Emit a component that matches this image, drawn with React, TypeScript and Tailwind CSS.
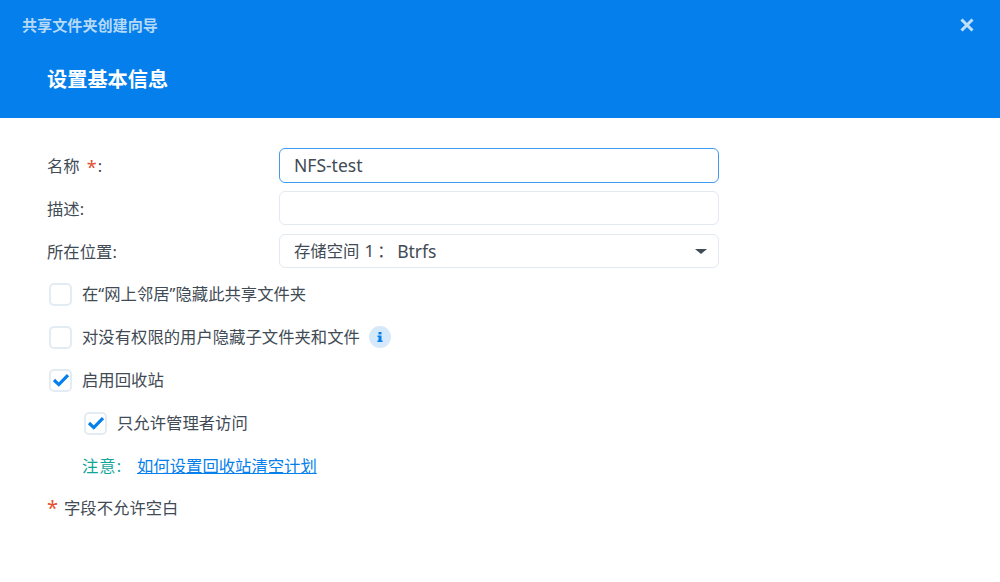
const Check = () => (
  <svg width="18" height="14" viewBox="0 0 18 14" fill="none">
    <path d="M2 7L6.8 11.6L16 2.2" stroke="#057feb" strokeWidth="3.2" />
  </svg>
)

const Box = ({ on }: { on?: boolean }) => (
  <span className="w-[23px] h-[23px] rounded-[5px] border-2 border-[#e3ebf3] bg-white flex items-center justify-center shrink-0">
    {on && <Check />}
  </span>
)

const font = { fontFamily: '"Noto Sans", "Noto Sans CJK SC", sans-serif' }

const App = () => {
  return (
    <div style={font} className="w-[1000px] h-[582px] bg-white text-[16.35px] text-[#414b55] overflow-hidden">
      <div className="h-[118px] bg-[#057feb] relative pt-[14px]">
        <div className="pl-[22px] text-[15.1px] font-bold text-[#b4d9f9] leading-[22px]">共享文件夹创建向导</div>
        <div className="pl-[47px] mt-[29px] text-[20.2px] font-bold text-white leading-[28px]">设置基本信息</div>
        <svg className="absolute left-[960px] top-[18px]" width="14" height="14" viewBox="0 0 14 14" fill="none">
          <path d="M1.5 1.5L12.5 12.5M12.5 1.5L1.5 12.5" stroke="#c4e0f9" strokeWidth="3" />
        </svg>
      </div>

      <div className="pl-[47px] pt-[30px]">
        <div className="flex items-center h-[34px]">
          <div className="w-[232px] flex items-center pt-[2px]">
            名称
            <span className="text-[#e64c2e] text-[18px] leading-none ml-[7px] mr-[1px] mt-[2px]">*</span>:
          </div>
          <div className="w-[440px] h-[35px] rounded-md border border-[#3f9cf0] pl-[14px] flex items-center text-[17.5px]">NFS-test</div>
        </div>
        <div className="flex items-center h-[34px] mt-[9px]">
          <div className="w-[232px] pt-[2px]">描述:</div>
          <div className="w-[440px] h-[34px] rounded-md border border-[#e3e9f0]"></div>
        </div>
        <div className="flex items-center h-[34px] mt-[9px]">
          <div className="w-[232px] pt-[2px]">所在位置:</div>
          <div className="w-[440px] h-[34px] rounded-md border border-[#e3e9f0] pl-[14px] pr-[11px] flex items-center justify-between">
            <span className="flex items-center">
              存储空间
              <span className="text-[17px] ml-[5px]">1</span>
              <span className="ml-[3px] w-[20px]">：</span>
              <span className="text-[17.5px]">Btrfs</span>
            </span>
            <span className="w-0 h-0 border-x-[6px] border-x-transparent border-t-[5px] border-t-[#414b55]"></span>
          </div>
        </div>

        <div className="flex items-center gap-[10px] mt-[14px] h-[24px] pl-[2px]">
          <Box />
          <span>在“网上邻居”隐藏此共享文件夹</span>
        </div>
        <div className="flex items-center gap-[10px] mt-[19px] h-[24px] pl-[2px]">
          <Box />
          <span>对没有权限的用户隐藏子文件夹和文件</span>
          <span className="w-[22px] h-[22px] rounded-full bg-[#d6e9fb] -ml-[1px] flex items-center justify-center">
            <svg width="6" height="10" viewBox="0 0 6 10" fill="#057feb">
              <rect x="1.5" y="0" width="3" height="2.4" />
              <path d="M0.5 3.6H4.5V8.6H5.6V10H0.4V8.6H1.5V5H0.5Z" />
            </svg>
          </span>
        </div>
        <div className="flex items-center gap-[10px] mt-[19px] h-[24px] pl-[2px]">
          <Box on />
          <span>启用回收站</span>
        </div>
        <div className="flex items-center gap-[10px] mt-[19px] h-[24px] pl-[37px]">
          <Box on />
          <span>只允许管理者访问</span>
        </div>
        <div className="flex items-center mt-[19px] h-[24px] pl-[35px]">
          <span className="text-[#10a69a] w-[55px] tracking-[1px]">注意:</span>
          <span className="text-[#057feb] underline">如何设置回收站清空计划</span>
        </div>
        <div className="flex items-center mt-[18px] h-[24px]">
          <span className="text-[#e64c2e] text-[20px] w-[17px] leading-none">*</span>
          <span>字段不允许空白</span>
        </div>
      </div>
    </div>
  )
}

export default App
